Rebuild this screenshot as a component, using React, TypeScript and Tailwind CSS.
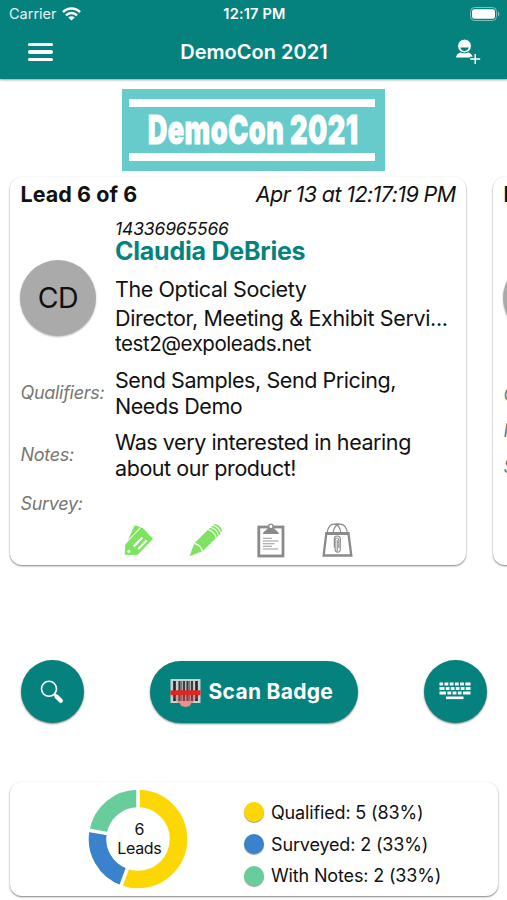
import { clsx } from "clsx";
import React from "react";

type Lead = {
  title: string;
  date: string;
  badge: string;
  initials: string;
  name: string;
  company: string;
  position: string;
  email: string;
  qualifiers: string[];
  notes: string[];
};

const leads: Lead[] = [
  {
    title: "Lead 6 of 6",
    date: "Apr 13 at 12:17:19 PM",
    badge: "14336965566",
    initials: "CD",
    name: "Claudia DeBries",
    company: "The Optical Society",
    position: "Director, Meeting & Exhibit Servi...",
    email: "test2@expoleads.net",
    qualifiers: ["Send Samples, Send Pricing,", "Needs Demo"],
    notes: ["Was very interested in hearing", "about our product!"],
  },
  {
    title: "Lead 5 of 6",
    date: "",
    badge: "",
    initials: "",
    name: "",
    company: "",
    position: "",
    email: "",
    qualifiers: [],
    notes: [],
  },
];

const stats = [
  { label: "Qualified: 5 (83%)", value: 5, dot: "bg-[#fdd703]", color: "#fdd703" },
  { label: "Surveyed: 2 (33%)", value: 2, dot: "bg-[#3a82cb]", color: "#3a82cb" },
  { label: "With Notes: 2 (33%)", value: 2, dot: "bg-[#68cd9b]", color: "#68cd9b" },
];

function WifiIcon() {
  return (
    <svg width="19" height="14" viewBox="0 0 19 14" fill="none" stroke="white" strokeWidth="2.5">
      <path d="M1 5.1a12 12 0 0 1 17 0" />
      <path d="M4 8.3a7.8 7.8 0 0 1 11 0" />
      <path d="M9.5 13.6 6.3 10.5a4.6 4.6 0 0 1 6.4 0z" fill="white" stroke="none" />
    </svg>
  );
}

function BatteryIcon() {
  return (
    <svg width="30" height="14" viewBox="0 0 30 14">
      <rect x="0.5" y="0.5" width="26" height="13" rx="4" fill="none" stroke="#7fc0bd" />
      <rect x="2" y="2.2" width="23" height="9.6" rx="2.4" fill="white" />
      <path d="M28 4.6c1.8.6 1.8 4.2 0 4.8z" fill="#7fc0bd" />
    </svg>
  );
}

function AddPersonIcon() {
  return (
    <svg width="25" height="26" viewBox="0 0 25 26">
      <path d="M0 18.6c.4-3.6 3-5 5.6-5.4h5.6c2.6.4 5 1.8 5.6 5.4z" fill="white" />
      <circle cx="8.5" cy="7" r="6.9" fill="white" stroke="#05827d" strokeWidth="1" />
      <path d="M4.3 8.6h8.4c-.5 4.6-7.9 4.6-8.4 0z" fill="#05827d" />
      <path d="M19.2 14.5v10.5M14 19.8h10.4" stroke="#05827d" strokeWidth="4" />
      <path d="M19.2 15v10M14.2 19.9h10" stroke="white" strokeWidth="1.5" />
    </svg>
  );
}

function TagIcon() {
  return (
    <svg width="30" height="32" viewBox="0 0 30 32">
      <path d="M3.5 17.5 10 2.5q.6-1.3 1.9-.9L17 3.3z" fill="#7fe362" />
      <path d="M.8 30.8 1.2 20.5 16.8 4q1-1 2 0L29 14.8 14 30.5q-.5.6-1.2.6z" fill="#7fe362" />
      <path d="M1.5 19.2 16.3 3.5" stroke="white" strokeWidth="1" />
      <path d="m9.7 22.5 8.6-9M14.2 25.2l8.5-9" stroke="white" strokeWidth="2" />
      <circle cx="4.8" cy="27.3" r="1.5" fill="white" />
    </svg>
  );
}

function PencilIcon() {
  return (
    <svg width="34" height="34" viewBox="0 0 34 34">
      <path d="M.5 33.3 5.3 20.2 23.5 2.2c4-3.9 12.1 4 8.3 8.2L13.5 28.3z" fill="#7fe362" />
      <path d="M5.3 20.6c3.8.5 7.2 3.7 8 7.6" fill="none" stroke="white" strokeWidth="1.5" />
      <path
        d="M18.5 6.5c4.2.8 7.5 4 8.7 8.5M21 4.2c4.1.8 7.5 4.2 8.5 8.3M23.3 2.2c4 .8 7.4 4.1 8.5 8.2"
        fill="none"
        stroke="white"
        strokeWidth="1.1"
      />
    </svg>
  );
}

function ClipboardIcon() {
  return (
    <svg width="28" height="35" viewBox="0 0 28 35">
      <rect x="1.8" y="4" width="24.2" height="29" fill="white" stroke="#8a8a8a" strokeWidth="2.8" />
      <path d="M6 11c0-3.2 3.7-3 4.7-6h6.4c1 3 4.7 2.8 4.7 6z" fill="#8a8a8a" />
      <circle cx="13.9" cy="3.4" r="2.2" fill="white" stroke="#8a8a8a" strokeWidth="1.3" />
      <path d="M6 15.2h9M6 18h15.5M6 20.7h11.5M6 23.3h9M6 26h15" stroke="#999" strokeWidth="1.1" />
    </svg>
  );
}

function BagIcon() {
  return (
    <svg width="31" height="34" viewBox="0 0 31 34" fill="none" stroke="#8a8a8a">
      <path
        d="M5 10.5C6 3 9.5 1.2 12 1.2S18 3 19 10.5M11 10.5C12 3 15.5 1.2 18 1.2S24.500 3 25.500 10.500M9 1.800c3-1.300 9-1.300 12.500 0"
        strokeWidth="1.2"
      />
      <path d="M4.3 10.5h22.2l2.8 22H1.6z" fill="white" strokeWidth="2.3" />
      <path d="M3.5 10.5h23.8" strokeWidth="3" />
      <path
        d="M12.300 24.500v-8.800c0-3.600 6-3.600 6 0v10.800c0 3.800-5.200 3.300-5.200 0v-9.500c0-2.600 3.700-2.600 3.700 0v8"
        strokeWidth="1.1"
      />
      <path d="M15.2 17v11" strokeWidth="1.1" />
    </svg>
  );
}

function SearchIcon() {
  return (
    <svg width="24" height="24" viewBox="0 0 24 24" fill="none" stroke="white">
      <circle cx="9" cy="8.8" r="7.5" strokeWidth="1.6" />
      <path d="m14.2 14 2.5 2.5" strokeWidth="2" />
      <path d="m16.5 16.500 4.300 4.300" strokeWidth="4.400" strokeLinecap="round" />
    </svg>
  );
}

function BarcodeIcon() {
  return (
    <svg width="31" height="30" viewBox="0 0 31 30" className="relative top-px">
      <rect x=".5" y="1" width="30" height="24" fill="#c9cfcf" />
      <path d="M4.5 3v20M26.5 3v20" stroke="#222" strokeWidth="2.6" />
      <path d="M9.5 3v20M14 3v20M17.5 3v20M22 3v20" stroke="#3c3c3c" strokeWidth="2.2" />
      <path d="M11.7 3v20M19.7 3v20" stroke="#666" strokeWidth="1" />
      <path d="M1.5 17.5h28l-7 7.500h-14z" fill="#e04040" fillOpacity=".4" />
      <path d="M9 23.5h13l-2 4.300q-4.500 2.200-9 0z" fill="#ef8f8f" />
      <rect x=".5" y="12.3" width="30" height="4.8" fill="#e02424" />
    </svg>
  );
}

function KeyboardIcon() {
  return (
    <svg width="32" height="18" viewBox="0 0 32 18" stroke="white" fill="none" className="relative -top-px">
      <path d="M.5 2h31" strokeWidth="3" strokeDasharray="3.600 1.400 3.800 1.400 3.800 1.400 3.800 1.400 3.800 1.400 6 0" />
      <path d="M.5 6.500h31" strokeWidth="3" strokeDasharray="5 1.300 3.700 1.300 3.700 1.300 3.700 1.300 3.700 1.300 5 0" />
      <path d="M.5 11h31" strokeWidth="3" strokeDasharray="6.500 1.400 3.800 1.400 3.800 1.400 3.800 1.400 8 0" />
      <path d="M7 15.800h17.500" strokeWidth="2.600" />
    </svg>
  );
}

function Donut() {
  const total = stats.reduce((sum, s) => sum + s.value, 0);
  const r = 40.5;
  const length = 2 * Math.PI * r;
  let start = 0;

  return (
    <svg width="100" height="100" viewBox="-50 -50 100 100">
      {stats.map((s) => {
        const angle = (start / total) * 360 - 90;
        start += s.value;
        return (
          <circle
            key={s.label}
            r={r}
            fill="none"
            stroke={s.color}
            strokeWidth="17.5"
            strokeDasharray={`${(s.value / total) * length} ${length}`}
            transform={`rotate(${angle})`}
          />
        );
      })}
      <path d="M0-28v-22" stroke="white" strokeWidth="3.5" />
      <path d="M0-28v-22" stroke="white" strokeWidth="3.5" transform="rotate(200)" />
      <path d="M0-28v-22" stroke="white" strokeWidth="3.5" transform="rotate(280)" />
    </svg>
  );
}

function Field({ label, lines = [] }: { label: string; lines?: string[] }) {
  return (
    <div className="flex min-h-[26px] items-center">
      <div className="w-[94.5px] shrink-0 text-[18px] italic leading-[26px] tracking-[-0.3px] text-[#77776f]">
        {label}
      </div>
      <div className="text-[21.5px] leading-[26px] tracking-[-0.43px]">
        {lines.map((line) => (
          <div key={line} className="whitespace-nowrap">
            {line}
          </div>
        ))}
      </div>
    </div>
  );
}

function LeadCard({ lead, tall }: { lead: Lead; tall?: boolean }) {
  return (
    <div className="flex h-[388px] w-[456px] shrink-0 flex-col rounded-[12px] bg-white px-[10.5px] pt-1 shadow-[0_1px_2px_rgba(0,0,0,0.5)]">
      <div className="flex h-[26px] items-center justify-between whitespace-nowrap text-[21.5px]">
        <div className="font-bold tracking-[0.05px]">{lead.title}</div>
        <div className="italic tracking-[-0.6px]">{lead.date}</div>
      </div>
      <div className={clsx("flex", tall ? "h-[175px]" : "h-[159.5px]")}>
        <div className="w-[94.5px] shrink-0 pt-[53px]">
          <div className="-ml-[0.5px] flex size-[76px] items-center justify-center rounded-full bg-[#aaa] text-[28.5px] tracking-[-0.5px] shadow-[0_1px_2px_rgba(0,0,0,0.3)]">
            {lead.initials}
          </div>
        </div>
        <div className="whitespace-nowrap pt-[11px]">
          <div className="h-[21px] text-[17.5px] italic leading-[21px] tracking-[-0.15px]">{lead.badge}</div>
          <div className="h-6 text-[25px] font-bold leading-6 tracking-[-0.23px] text-[#05827d]">{lead.name}</div>
          <div className="mt-[13px] h-[26px] text-[21.5px] leading-[26px] tracking-[-0.4px]">{lead.company}</div>
          <div className="mt-[3px] h-[26px] text-[21.5px] leading-[26px] tracking-[-0.35px]">{lead.position}</div>
          <div className="h-[26px] text-[20.5px] leading-[26px] tracking-[-0.45px]">{lead.email}</div>
        </div>
      </div>
      <div className="flex flex-col gap-[10px]">
        <Field label="Qualifiers:" lines={lead.qualifiers} />
        <Field label="Notes:" lines={lead.notes} />
        <Field label="Survey:" />
      </div>
      {!tall && (
        <div className="mt-[6px] flex h-[35px] items-center pl-[103px]">
          <div className="w-[65px]">
            <TagIcon />
          </div>
          <div className="w-[68.5px]">
            <PencilIcon />
          </div>
          <div className="w-[65px]">
            <ClipboardIcon />
          </div>
          <BagIcon />
        </div>
      )}
    </div>
  );
}

export default function App() {
  return (
    <div className="h-[900px] w-[507px] overflow-hidden bg-white font-['Inter',sans-serif] text-[#111]">
      <header className="h-[79px] bg-[#05827d] text-white shadow-[0_1px_2px_rgba(0,0,0,0.4)]">
        <div className="grid h-[27px] grid-cols-3 items-center pl-[9px] pr-[7px] text-[14.5px]">
          <div className="flex items-center gap-[5px] text-[#e3f3f2]">
            Carrier <WifiIcon />
          </div>
          <div className="text-center font-semibold tracking-[0.2px]">12:17 PM</div>
          <div className="flex justify-end">
            <BatteryIcon />
          </div>
        </div>
        <div className="flex h-[50px] items-center justify-between pl-7 pr-[26px]">
          <button className="flex w-[25px] flex-col gap-[4px]">
            <span className="h-[3.5px] w-full rounded-full bg-white" />
            <span className="h-[3.5px] w-full rounded-full bg-white" />
            <span className="h-[3.5px] w-full rounded-full bg-white" />
          </button>
          <h1 className="pr-px text-[20px] font-semibold tracking-[0.03px]">DemoCon 2021</h1>
          <button>
            <AddPersonIcon />
          </button>
        </div>
      </header>

      <div className="ml-[122px] mt-[10px] flex h-[82px] w-[263px] flex-col justify-between bg-[#66cbca] py-[10px] pl-[7px] pr-[10px]">
        <div className="h-2 bg-white" />
        <div className="flex h-[46px] items-center justify-center whitespace-nowrap text-white">
          <span className="ml-[3px] scale-x-[0.68] text-[40px] font-black tracking-[0.6px] [-webkit-text-stroke:0.8px_white]">
            DemoCon 2021
          </span>
        </div>
        <div className="h-2 bg-white" />
      </div>

      <section className="mt-[6px] flex gap-[27px] pl-[10px]">
        <LeadCard lead={leads[0]} />
        <LeadCard lead={leads[1]} tall />
      </section>

      <div className="mt-[95px] flex items-center justify-between px-[20.5px]">
        <button className="flex size-[63px] items-center justify-center rounded-full bg-[#05827d] shadow-[0_1px_2px_rgba(0,0,0,0.5)]">
          <SearchIcon />
        </button>
        <button className="flex h-[62px] w-[208px] items-center gap-2 rounded-full bg-[#05827d] pl-5 text-[21px] font-bold text-white shadow-[0_1px_2px_rgba(0,0,0,0.5)]">
          <BarcodeIcon />
          <span className="whitespace-nowrap tracking-[0.3px]">Scan Badge</span>
        </button>
        <button className="flex size-[63px] items-center justify-center rounded-full bg-[#05827d] shadow-[0_1px_2px_rgba(0,0,0,0.5)]">
          <KeyboardIcon />
        </button>
      </div>

      <section className="ml-[10px] mt-[59px] flex h-[114px] w-[488px] rounded-[12px] bg-white shadow-[0_1px_2px_rgba(0,0,0,0.5)]">
        <div className="ml-[78.4px] mt-[7.4px] grid size-[100px] place-items-center *:[grid-area:1/1]">
          <Donut />
          <div className="pl-[2px] text-center text-[16px] leading-[19px] tracking-[-0.3px]">
            6<br />
            Leads
          </div>
        </div>
        <div className="ml-[55.6px] mt-[14.6px]">
          {stats.map((s) => (
            <div key={s.label} className="flex h-[31.7px] items-center gap-[7px]">
              <span className={clsx("size-5 rounded-full shadow-[0_1px_1px_rgba(0,0,0,0.4)]", s.dot)} />
              <span className="whitespace-nowrap text-[18px] tracking-[-0.15px]">{s.label}</span>
            </div>
          ))}
        </div>
      </section>
    </div>
  );
}
